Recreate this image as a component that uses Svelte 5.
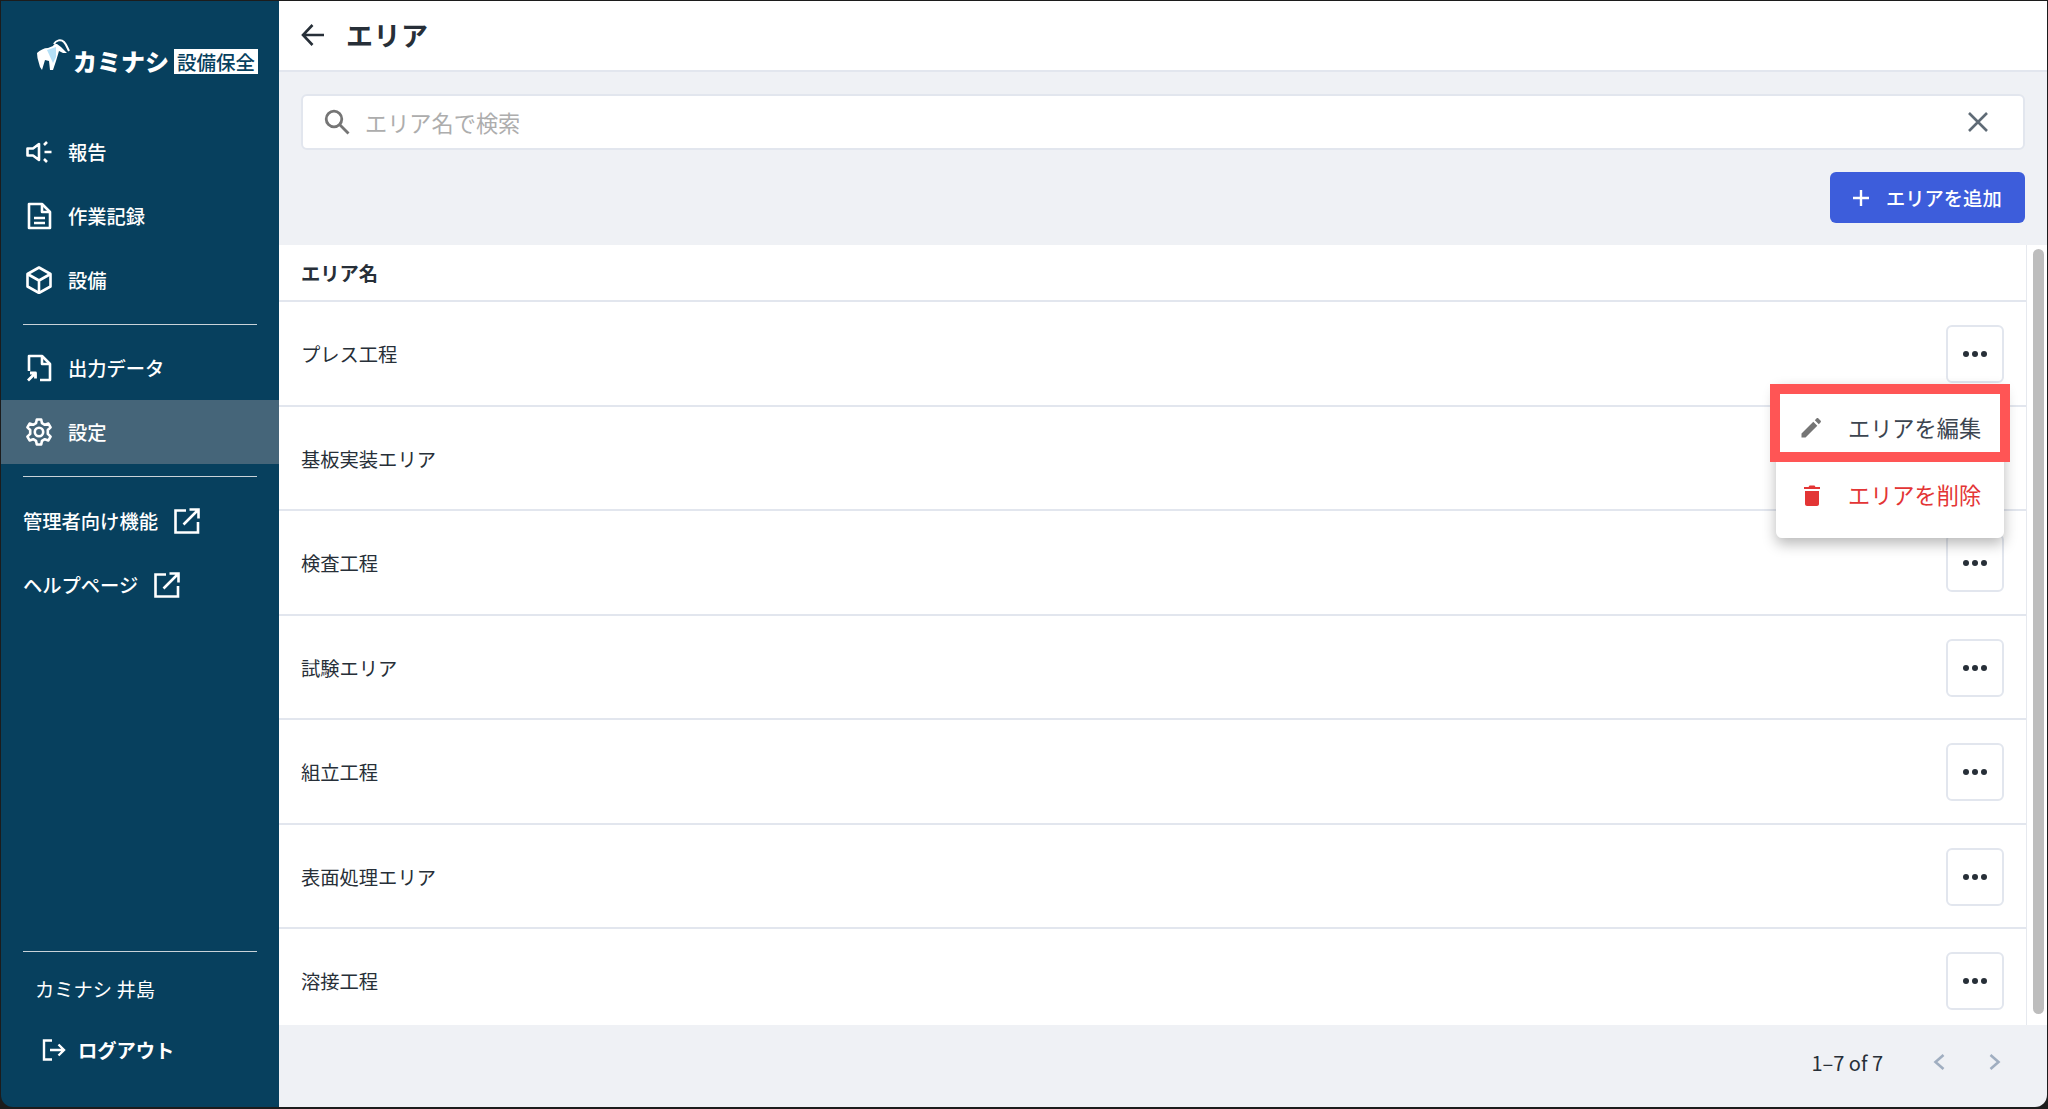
<script>
  const rows = ["プレス工程", "基板実装エリア", "検査工程", "試験エリア", "組立工程", "表面処理エリア", "溶接工程"];
</script>

<div class="shell">
  <aside class="sidebar">
    <div class="logo">
      <svg class="goat" width="34" height="34" viewBox="0 0 34 34">
        <path fill="#fff" d="M1 15 C4 12 8 10 12 10 L17 8 C18 6 19 6 21 6 L25 9 L31 15 L27 15 L23 13 L20 23 L17 32 L14 32 L13 23 L9 22 L6 32 L4 29 L1.5 20 Z"/>
        <path fill="none" stroke="#fff" stroke-width="2" d="M18 6 C20 2 25 1 28 4 C30 6 31 9 33 13"/>
        <path fill="#b5e0f7" d="M11 12 L20 9 L20 19 L17 25 Z"/>
      </svg>
      <span class="brand">カミナシ</span>
      <span class="badge">設備保全</span>
    </div>

    <nav class="group first">
      <div class="item">
        <svg viewBox="0 0 26 26" width="26" height="26" fill="none" stroke="#fff" stroke-width="2.6">
          <path d="M13 5 V21 L7 16.5 H1.5 V9.5 H7 Z" stroke-linejoin="round"/>
          <path d="M21 3 L18 6 M21 23 L18 20 M18.5 13 H25.5" stroke-linecap="butt"/>
        </svg>
        <span>報告</span>
      </div>
      <div class="item">
        <svg viewBox="0 0 26 28" width="26" height="28" fill="none" stroke="#fff" stroke-width="2.6" stroke-linejoin="round">
          <path d="M3 2 H16 L24 10 V26 H3 Z"/>
          <path d="M16 2 V10 H24 M8 16 H19 M8 21 H19"/>
        </svg>
        <span>作業記録</span>
      </div>
      <div class="item">
        <svg viewBox="0 0 26 28" width="26" height="28" fill="none" stroke="#fff" stroke-width="2.6" stroke-linejoin="round">
          <path d="M13 1.5 L24.5 8 V20.5 L13 27 L1.5 20.5 V8 Z"/>
          <path d="M1.5 8 L13 14.5 L24.5 8 M13 14.5 V27"/>
        </svg>
        <span>設備</span>
      </div>
    </nav>

    <div class="rule"></div>

    <nav class="group">
      <div class="item">
        <svg viewBox="0 0 26 28" width="26" height="28" fill="none" stroke="#fff" stroke-width="2.6" stroke-linejoin="round">
          <path d="M3 17 V2 H16 L24 10 V26 H14"/>
          <path d="M16 2 V10 H24"/>
          <path d="M2 26.5 L9 19.5 M4 19 H9.5 V24.5" stroke-width="2.8"/>
        </svg>
        <span>出力データ</span>
      </div>
      <div class="item active">
        <svg viewBox="0 0 28 28" width="28" height="28" fill="none" stroke="#fff" stroke-width="2.6" stroke-linejoin="round">
          <circle cx="14" cy="14" r="4.2"/>
          <path d="M11.8 1.5 H16.2 L17 5.2 L19.8 6.8 L23.4 5.6 L25.6 9.4 L22.8 12 V15.9 L25.6 18.6 L23.4 22.4 L19.8 21.2 L17 22.8 L16.2 26.5 H11.8 L11 22.8 L8.2 21.2 L4.6 22.4 L2.4 18.6 L5.2 15.9 V12 L2.4 9.4 L4.6 5.6 L8.2 6.8 L11 5.2 Z"/>
        </svg>
        <span>設定</span>
      </div>
    </nav>

    <div class="rule second"></div>

    <nav class="group">
      <div class="item link">
        <span>管理者向け機能</span>
        <svg viewBox="0 0 26 26" width="26" height="26" fill="none" stroke="#fff" stroke-width="2.6">
          <path d="M12 2.5 H1.5 V24.5 H24 V14"/>
          <path d="M9.5 16.5 L24 2 M15.5 1.5 H24.5 V10.5"/>
        </svg>
      </div>
      <div class="item link">
        <span>ヘルプページ</span>
        <svg viewBox="0 0 26 26" width="26" height="26" fill="none" stroke="#fff" stroke-width="2.6">
          <path d="M12 2.5 H1.5 V24.5 H24 V14"/>
          <path d="M9.5 16.5 L24 2 M15.5 1.5 H24.5 V10.5"/>
        </svg>
      </div>
    </nav>

    <div class="foot">
      <div class="rule"></div>
      <div class="user">カミナシ 井島</div>
      <div class="logout">
        <svg viewBox="0 0 24 22" width="24" height="22" fill="none" stroke="#fff" stroke-width="2.4">
          <path d="M10 1.5 H2 V20.5 H10"/>
          <path d="M8 11 H22 M16.5 5.5 L22 11 L16.5 16.5"/>
        </svg>
        <span>ログアウト</span>
      </div>
    </div>
  </aside>

  <main class="main">
    <header class="topbar">
      <svg viewBox="0 0 24 24" width="24" height="24" fill="none" stroke="#272f38" stroke-width="2.6">
        <path d="M23 12 H2 M11.5 2 L2 12 L11.5 22"/>
      </svg>
      <h1>エリア</h1>
    </header>

    <div class="tools">
      <div class="search">
        <svg viewBox="0 0 26 26" width="26" height="26" fill="none" stroke="#757575" stroke-width="2.8">
          <circle cx="10" cy="10" r="7.8"/>
          <path d="M15.8 15.8 L24.5 24.5"/>
        </svg>
        <span class="placeholder">エリア名で検索</span>
        <svg class="clear" viewBox="0 0 20 20" width="20" height="20" fill="none" stroke="#5f6b76" stroke-width="2.6">
          <path d="M1 1 L19 19 M19 1 L1 19"/>
        </svg>
      </div>
      <div class="actions">
        <button class="add">
          <svg viewBox="0 0 18 18" width="18" height="18" fill="none" stroke="#fff" stroke-width="2.4">
            <path d="M9 1 V17 M1 9 H17"/>
          </svg>
          <span>エリアを追加</span>
        </button>
      </div>
    </div>

    <section class="table">
      <div class="rowhead">エリア名</div>
      {#each rows as name}
        <div class="row">
          <span>{name}</span>
          <button class="more" aria-label="more"><i></i><i></i><i></i></button>
        </div>
      {/each}

      <div class="menu">
        <div class="menuitem">
          <svg viewBox="0 0 24 24" width="24" height="24"><path fill="#757575" d="M1.5 18.5 V22.5 H5.5 L17.3 10.7 L13.3 6.7 Z M20.7 7.3 C21.1 6.9 21.1 6.2 20.7 5.8 L18.2 3.3 C17.8 2.9 17.1 2.9 16.7 3.3 L14.8 5.2 L18.8 9.2 Z"/></svg>
          <span>エリアを編集</span>
        </div>
        <div class="menuitem danger">
          <svg viewBox="0 0 24 24" width="24" height="24"><path fill="#e33535" d="M4 7 H20 V5 H15.5 L14.5 3.5 H9.5 L8.5 5 H4 Z M5 9 H19 V22 C19 23 18 24 17 24 H7 C6 24 5 23 5 22 Z"/></svg>
          <span>エリアを削除</span>
        </div>
      </div>
      <div class="highlight"></div>
      <div class="scrollthumb"></div>
    </section>

    <footer class="pager">
      <span>1–7 of 7</span>
      <svg viewBox="0 0 14 18" width="14" height="18" fill="none" stroke="#a0aec0" stroke-width="2.6"><path d="M11.5 2 L3.5 9 L11.5 16"/></svg>
      <svg viewBox="0 0 14 18" width="14" height="18" fill="none" stroke="#a0aec0" stroke-width="2.6"><path d="M2.5 2 L10.5 9 L2.5 16"/></svg>
    </footer>
  </main>
</div>

<style>
  :global(body) {
    margin: 0;
    background: #1c1c1c;
  }

  .shell {
    display: flex;
    box-sizing: border-box;
    width: 2048px;
    height: 1109px;
    padding: 1px 1px 2px 1px;
    font-family: "Noto Sans CJK JP", "Noto Sans", sans-serif;
    color: #272f38;
  }

  .sidebar {
    display: flex;
    flex-direction: column;
    width: 278px;
    flex: none;
    background: #07405e;
    color: #fff;
    border-bottom-left-radius: 12px;
  }

  .logo {
    display: flex;
    align-items: center;
    height: 118px;
    padding: 0 0 0 35px;
    box-sizing: border-box;
  }

  .goat {
    margin-top: -10px;
  }

  .brand {
    font-size: 24px;
    font-weight: 900;
    margin-left: 3px;
    line-height: 1;
    white-space: nowrap;
    margin-top: 2px;
  }

  .badge {
    background: #fff;
    color: #07405e;
    font-size: 19.5px;
    font-weight: 500;
    line-height: 25px;
    padding: 0 3px;
    margin-left: 5px;
    margin-top: 2px;
    white-space: nowrap;
  }

  .group.first {
    margin-top: 0.5px;
  }

  .item {
    display: flex;
    align-items: center;
    height: 64px;
    padding-left: 24px;
    font-size: 19.3px;
    font-weight: 500;
  }

  .item svg {
    width: 28px;
    flex: none;
  }

  .item span {
    margin-left: 15px;
  }

  .item.active {
    background: #456579;
  }

  .item.link {
    padding-left: 22px;
  }

  .item.link span {
    margin-left: 0;
  }

  .item.link svg {
    margin-left: 15px;
  }

  .rule {
    height: 1px;
    margin: 12px 22px 11.5px;
    background: #c9d3d9;
  }

  .rule.second {
    margin: 11.5px 22px 12px;
  }

  .foot {
    margin-top: auto;
    padding-bottom: 37.3px;
  }

  .foot .rule {
    margin: 0 22px;
  }

  .user {
    margin: 23.4px 0 0 34px;
    font-size: 19.3px;
    line-height: 26px;
    font-weight: 400;
  }

  .logout {
    display: flex;
    align-items: center;
    gap: 12px;
    margin: 28px 0 0 41px;
    height: 40px;
    font-size: 19.3px;
    font-weight: 700;
  }

  .main {
    display: flex;
    flex-direction: column;
    flex: 1;
    min-width: 0;
    background: #eff1f5;
    border-bottom-right-radius: 12px;
    overflow: hidden;
  }

  .topbar {
    display: flex;
    align-items: center;
    gap: 21px;
    height: 69px;
    box-sizing: content-box;
    flex: none;
    padding: 0 0 0 22px;
    background: #fff;
    border-bottom: 2px solid #e2e6ee;
  }

  .topbar svg {
    margin-bottom: 2px;
  }

  .topbar h1 {
    margin: 0 0 2px;
    font-size: 27px;
    font-weight: 700;
    letter-spacing: 0.5px;
  }

  .tools {
    padding: 22px 22px 22px 22px;
    flex: none;
  }

  .search {
    display: flex;
    align-items: center;
    box-sizing: border-box;
    height: 56px;
    padding: 0 35px 0 21px;
    background: #fff;
    border: 2px solid #e2e6ee;
    border-radius: 6px;
  }

  .placeholder {
    margin-left: 15px;
    font-size: 22.2px;
    color: #adadad;
  }

  .clear {
    margin-left: auto;
  }

  .actions {
    display: flex;
    justify-content: flex-end;
    margin-top: 22px;
  }

  .add {
    display: flex;
    align-items: center;
    gap: 16px;
    width: 195px;
    height: 51px;
    padding: 0 0 0 22px;
    border: 0;
    border-radius: 6px;
    background: #3d5ddb;
    color: #fff;
    font: 500 19.3px "Noto Sans CJK JP", sans-serif;
    white-space: nowrap;
  }

  .table {
    position: relative;
    height: 780px;
    flex: none;
    margin-right: -1px;
    padding-right: 21px;
    background: #fff;
    overflow: hidden;
  }

  .table::after {
    content: "";
    position: absolute;
    top: 0;
    bottom: 0;
    right: 21px;
    width: 1px;
    background: #e6e9ef;
  }

  .rowhead {
    display: flex;
    align-items: center;
    height: 57px;
    padding-left: 22px;
    font-size: 19.3px;
    font-weight: 700;
    border-bottom: 2px solid #e2e6ee;
    box-sizing: border-box;
  }

  .row {
    display: flex;
    align-items: center;
    justify-content: space-between;
    box-sizing: border-box;
    height: 104.5px;
    padding: 2px 23px 0 22px;
    font-size: 19.3px;
    border-bottom: 2px solid #e2e6ee;
  }

  .more {
    display: flex;
    align-items: center;
    justify-content: center;
    gap: 3px;
    width: 58px;
    height: 58px;
    padding: 0;
    background: #fff;
    border: 2px solid #e2e6ee;
    border-radius: 6px;
  }

  .more i {
    width: 6px;
    height: 6px;
    border-radius: 50%;
    background: #272f38;
  }

  .menu {
    position: absolute;
    top: 139px;
    left: 1497px;
    width: 228px;
    padding: 9px 0 0;
    background: #fff;
    border-radius: 6px;
    box-shadow: 0 6px 14px rgba(0, 0, 0, 0.28);
  }

  .menuitem {
    display: flex;
    align-items: center;
    height: 67px;
    padding-left: 24px;
    font-size: 22.2px;
    color: #3c4550;
  }

  .menuitem span {
    margin-left: 24px;
    white-space: nowrap;
  }

  .menuitem.danger {
    height: 78px;
    padding-bottom: 10px;
    box-sizing: border-box;
    color: #e33535;
  }

  .highlight {
    position: absolute;
    top: 139px;
    left: 1491px;
    box-sizing: border-box;
    width: 240px;
    height: 78px;
    border: 10px solid #ff5555;
  }

  .scrollthumb {
    position: absolute;
    top: 4px;
    right: 4px;
    width: 11px;
    height: 765px;
    border-radius: 6px;
    background: #bdbdbd;
  }

  .pager {
    display: flex;
    align-items: center;
    justify-content: flex-end;
    flex: 1;
    padding: 0 45px 8px 0;
    gap: 42px;
    font-size: 20px;
  }

  .pager span {
    margin-right: 7px;
  }
</style>
